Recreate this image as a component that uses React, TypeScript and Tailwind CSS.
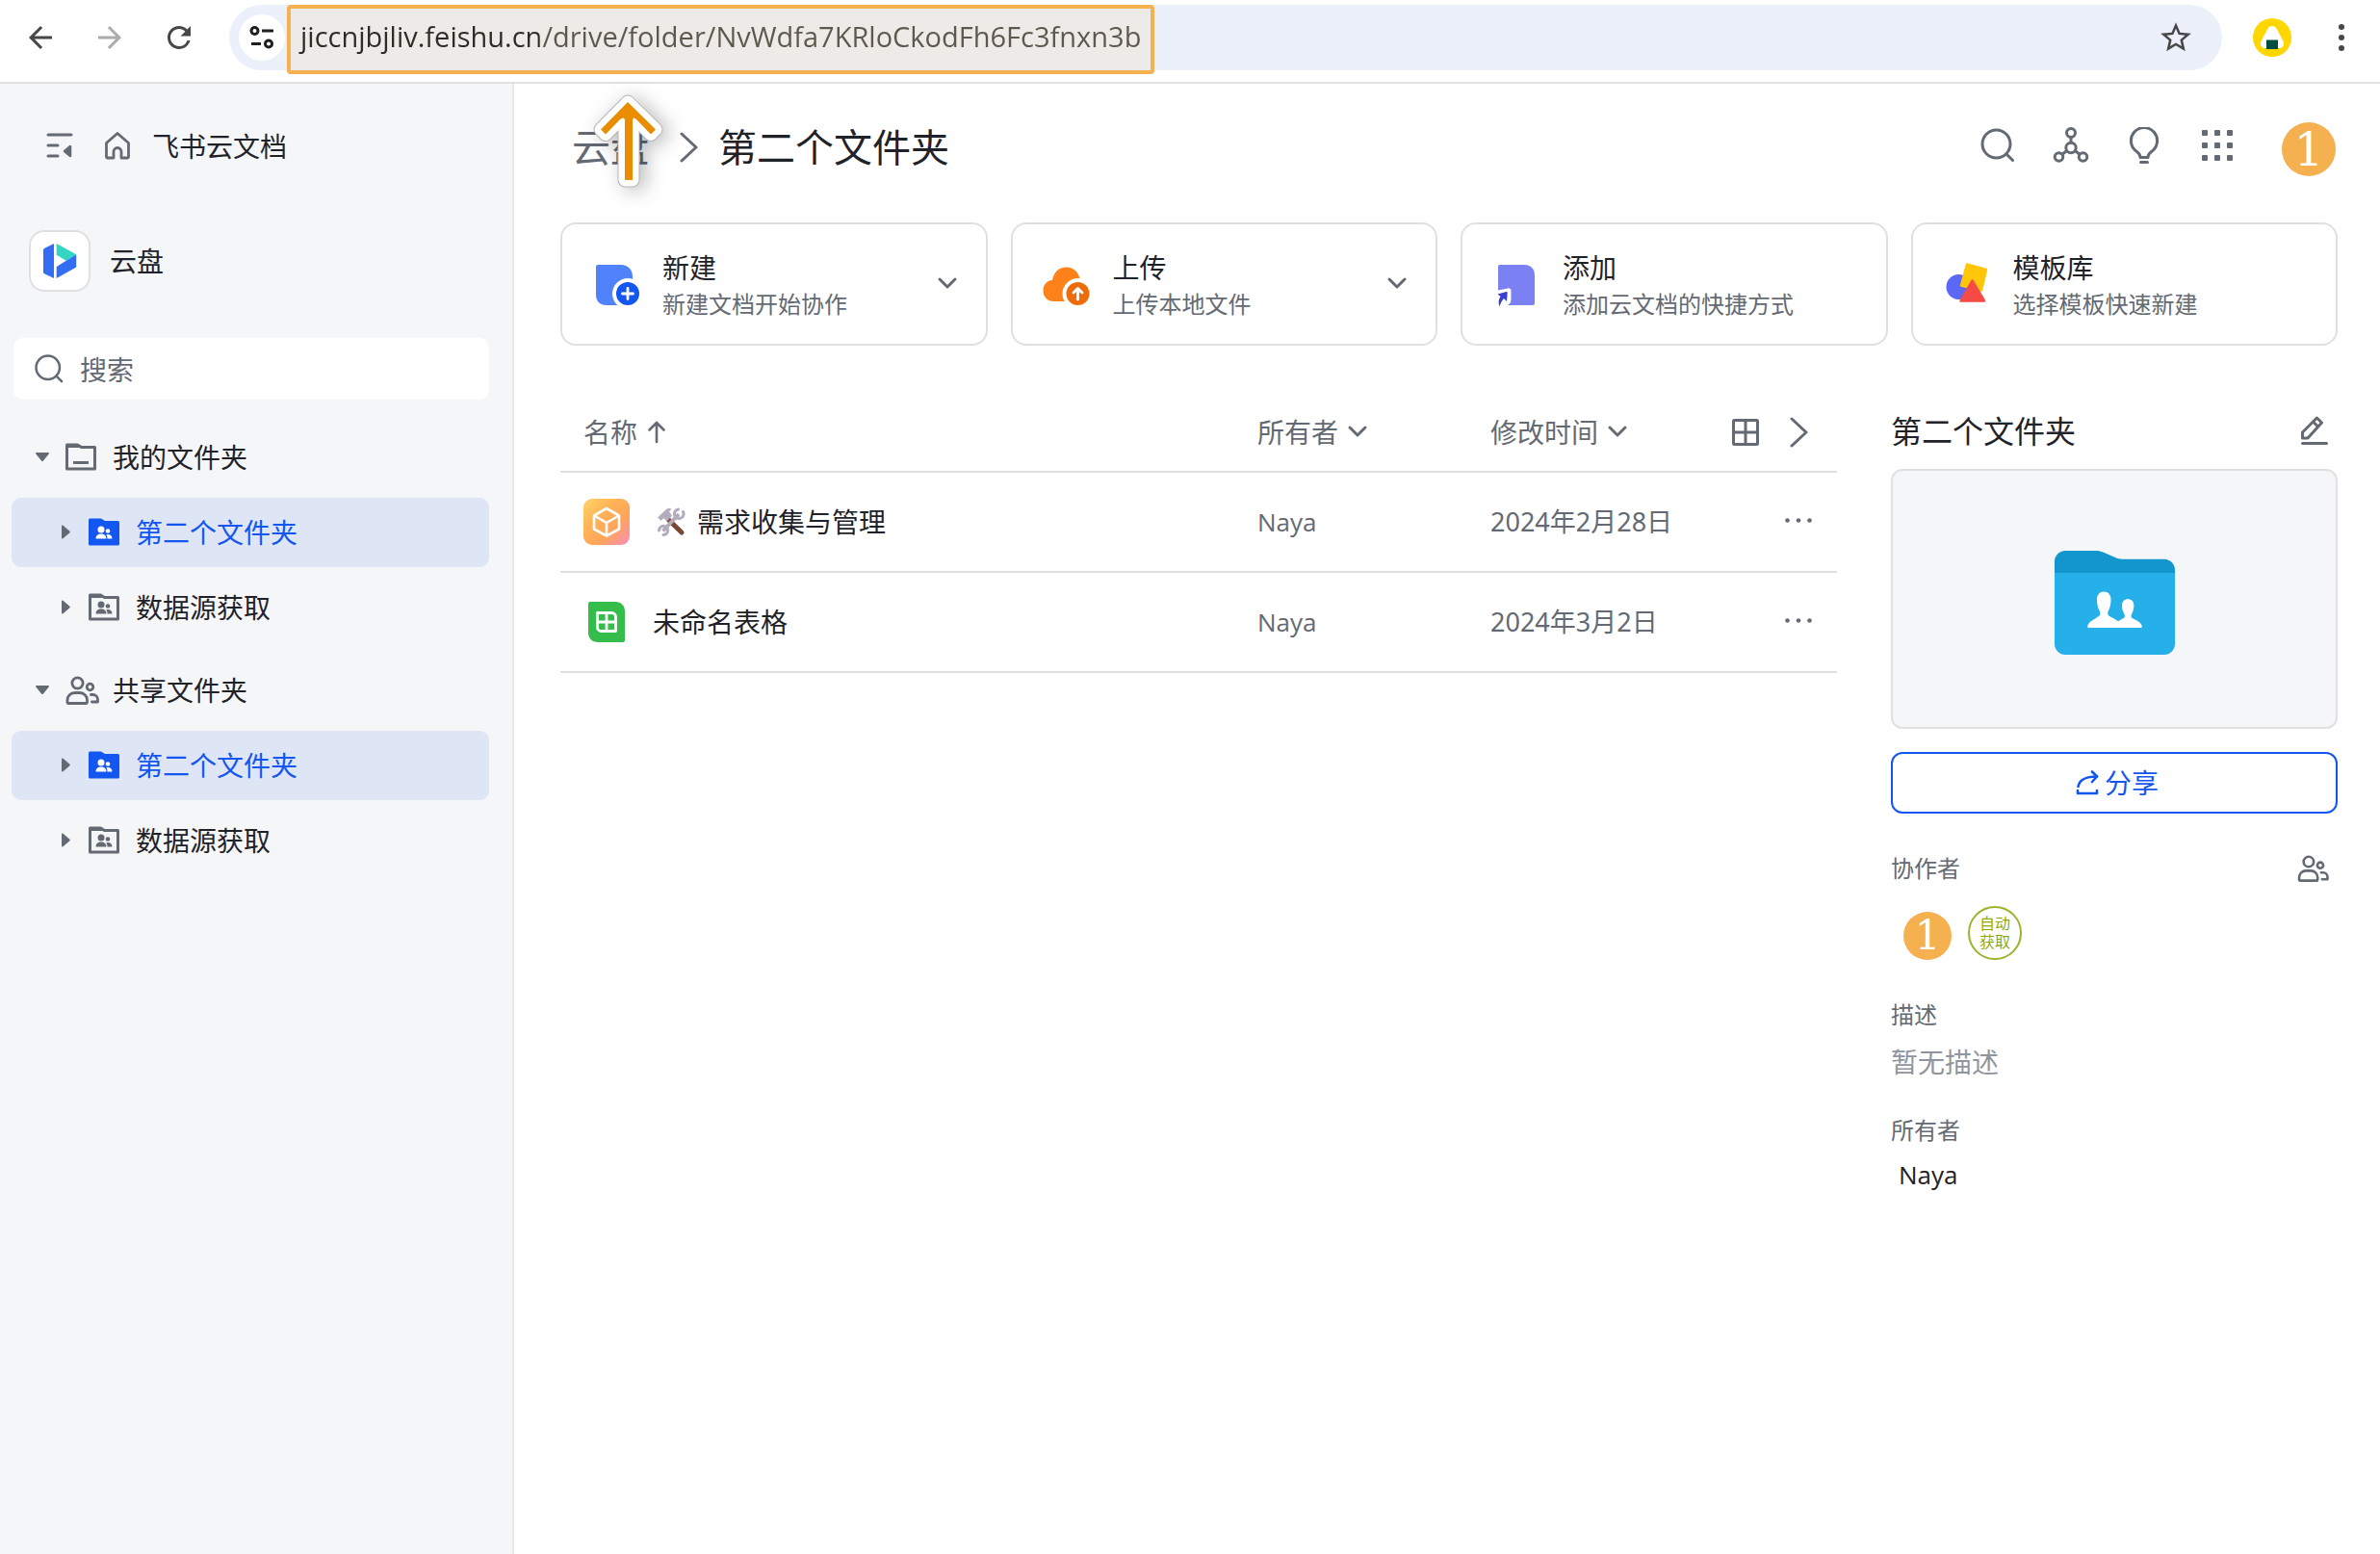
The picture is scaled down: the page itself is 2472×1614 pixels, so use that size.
import React from "react";
import { MdArrowBack, MdArrowForward, MdRefresh, MdStarBorder } from "react-icons/md";

type IconProps = { className?: string };

const stroke = {
  fill: "none",
  stroke: "currentColor",
  strokeWidth: 3,
  strokeLinecap: "round" as const,
  strokeLinejoin: "round" as const,
};

/* ---------- line icons ---------- */

function TuneIcon() {
  return (
    <svg viewBox="0 0 32 32" className="h-8 w-8" {...stroke} strokeLinecap="butt">
      <circle cx="8.500" cy="9" r="3.500" />
      <path d="M16 9h12M5 22.500h10" />
      <circle cx="23" cy="22.500" r="3.500" />
    </svg>
  );
}

function CollapseIcon() {
  return (
    <svg viewBox="0 0 32 32" className="h-8 w-8" {...stroke}>
      <path d="M4 4h24M4 15h10M4 26h10" />
      <path d="M27 16v10l-6-5z" fill="currentColor" strokeWidth="2.500" />
    </svg>
  );
}

function HomeIcon() {
  return (
    <svg viewBox="0 0 32 32" className="h-8 w-8" {...stroke} strokeWidth={2.8}>
      <path d="M4.500 12.500 16 2.500l11.500 10V27a1 1 0 0 1-1 1H20v-6.500a4 4 0 0 0-8 0V28H5.500a1 1 0 0 1-1-1z" />
    </svg>
  );
}

function SearchIcon({ className = "h-8 w-8" }: IconProps) {
  return (
    <svg viewBox="0 0 38 38" className={className} {...stroke}>
      <circle cx="17.500" cy="17.500" r="14.500" />
      <path d="m28 28 6.500 6.500" />
    </svg>
  );
}

function NetworkIcon() {
  return (
    <svg viewBox="0 0 38 38" className="h-[38px] w-[38px]" {...stroke}>
      <circle cx="19" cy="6" r="4.500" />
      <circle cx="19" cy="21.500" r="5.200" />
      <circle cx="6.500" cy="31" r="4.300" />
      <circle cx="31.500" cy="31" r="4.300" />
      <path d="M19 10.500v5.500M14.500 24.800l-4.500 3.500M23.500 24.800l4.500 3.500" />
    </svg>
  );
}

function BulbIcon() {
  return (
    <svg viewBox="0 0 38 38" className="h-[38px] w-[38px]" {...stroke}>
      <path d="M15 31.500c0-3.500-1.500-4.500-4-6.300a13.600 13.600 0 1 1 16 0c-2.500 1.800-4 2.800-4 6.300z" />
      <path d="M15.500 36.500h7" />
    </svg>
  );
}

function AppsIcon() {
  const at = [3, 16, 29];
  return (
    <svg viewBox="0 0 38 38" className="h-[38px] w-[38px]" fill="currentColor">
      {at.map((y) => at.map((x) => <rect key={`${x}-${y}`} x={x} y={y} width="6" height="6" rx="1" />))}
    </svg>
  );
}

function ChevronDown() {
  return (
    <svg viewBox="0 0 24 24" className="h-6 w-6 shrink-0" {...stroke}>
      <path d="m4 7 8 8 8-8" />
    </svg>
  );
}

function ChevronRight({ className = "h-8 w-5" }: IconProps) {
  return (
    <svg viewBox="0 0 20 32" className={className} {...stroke}>
      <path d="m2 2 15 14L2 30" />
    </svg>
  );
}

function SortUpIcon() {
  return (
    <svg viewBox="0 0 24 24" className="h-6 w-6" {...stroke} strokeWidth={2.6}>
      <path d="M12 22V2M4.500 9.500 12 2l7.500 7.500" />
    </svg>
  );
}

function GridIcon() {
  return (
    <svg viewBox="0 0 28 28" className="h-7 w-7" {...stroke}>
      <rect x="1.500" y="1.500" width="25" height="25" rx="1" />
      <path d="M14 2v24M2 14h24" />
    </svg>
  );
}

function PeopleIcon({ className = "h-[30px] w-9" }: IconProps) {
  return (
    <svg viewBox="0 0 36 30" className={className} {...stroke} strokeWidth={2.8}>
      <circle cx="12.500" cy="7.500" r="5.600" />
      <circle cx="25.500" cy="11.500" r="3.300" />
      <path d="M2 27.500V25a7.500 7.500 0 0 1 7.500-7.500h5.500a7.500 7.500 0 0 1 7.500 7.500v2.500a1 1 0 0 1-1 1H3a1 1 0 0 1-1-1z" />
      <path d="M26.500 19.500h2a5 5 0 0 1 5 5v2.500h-6" />
    </svg>
  );
}

function EditIcon() {
  return (
    <svg viewBox="0 0 32 32" className="h-8 w-8" {...stroke}>
      <path d="M3.500 23v-6L18.500 2l5 5L9 23z" />
      <path d="m14.500 6 5 5M3.500 28.500h25" />
    </svg>
  );
}

function ShareIcon() {
  return (
    <svg viewBox="0 0 24 26" className="h-[26px] w-6" {...stroke} strokeWidth={2.6}>
      <path d="M2.500 17C3.500 11 9 6.500 22 6.500" />
      <path d="m17 1.500 5 5-5 5.500M2 21v3h20v-3" />
    </svg>
  );
}

function MoreIcon() {
  return (
    <svg viewBox="0 0 28 28" className="h-7 w-7" fill="currentColor">
      <circle cx="2.500" cy="12.500" r="2.300" />
      <circle cx="14" cy="12.500" r="2.300" />
      <circle cx="25.500" cy="12.500" r="2.300" />
    </svg>
  );
}

/* ---------- tree icons ---------- */

function Caret({ open }: { open: boolean }) {
  return (
    <svg viewBox="0 0 16 16" className="h-4 w-4 text-[#646a73]" fill="currentColor">
      {open ? (
        <path d="M2 3h12c1 0 1.300.8.700 1.500L9 11.600c-.600.700-1.400.700-2 0L1.300 4.500C.7 3.800 1 3 2 3z" />
      ) : (
        <path d="M4 1.500v12c0 1 .8 1.300 1.500.7l6.700-5.700c.7-.6.7-1.400 0-2L5.500.8C4.800.2 4 .5 4 1.500z" />
      )}
    </svg>
  );
}

function FolderIcon() {
  return (
    <svg viewBox="0 0 32 32" className="h-8 w-8 text-[#646a73]" {...stroke}>
      <path d="M1.500 28V3h11l4 2.500h14V28z" />
      <path d="M3 3.500h9l3 2H3z" fill="currentColor" strokeWidth="1" />
      <path d="M8 21.500h16" strokeLinecap="butt" />
    </svg>
  );
}

function SharedFolderIcon({ active }: { active?: boolean }) {
  return (
    <svg viewBox="0 0 32 32" className={active ? "h-8 w-8 text-[#1456f0]" : "h-8 w-8 text-[#646a73]"} {...stroke}>
      <path d="M1.500 28V3h11l4 2.500h14V28z" fill={active ? "currentColor" : "none"} />
      <path d="M3 3.500h9l3 2H3z" fill="currentColor" strokeWidth="1" />
      <g fill={active ? "#fff" : "currentColor"} stroke="none">
        <circle cx="13" cy="13" r="3.500" />
        <circle cx="20" cy="14.500" r="2.300" />
        <path d="M7.500 22.500c0-3 2-5 5.500-5s5.500 2 5.500 5zM19.500 22.500c0-2-.5-3.400-1.200-4.300 3.600-.9 6.200.8 6.200 4.300z" />
      </g>
    </svg>
  );
}

/* ---------- coloured icons ---------- */

function DriveLogo() {
  return (
    <svg viewBox="0 0 36 36" className="h-9 w-9">
      <path d="M2 5 12 0v36L2 31.200C1.400 31 1 30.500 1 30V6.400C1 5.800 1.400 5.200 2 5z" fill="#336df4" />
      <path d="M14.700 0 35.200 11.300 24.700 17.800 14.700 11.800z" fill="#33d6c0" />
      <path d="M35.200 11.300v13.200L14.700 36V24z" fill="#336df4" />
    </svg>
  );
}

function NewDocIcon() {
  return (
    <svg viewBox="0 0 48 48" className="h-12 w-12 shrink-0">
      <path d="M5 4h24c7 0 12 5 12 12v30H14C7 46 3 42 3 35V6c0-1.200.8-2 2-2z" fill="#5083fb" />
      <circle cx="36" cy="34" r="16" fill="#fff" />
      <circle cx="36" cy="34" r="12" fill="#1456f0" />
      <path d="M36 28.500v11M30.500 34h11" stroke="#fff" strokeWidth="2.800" strokeLinecap="round" />
    </svg>
  );
}

function UploadIcon() {
  return (
    <svg viewBox="0 0 48 48" className="h-12 w-12 shrink-0 overflow-visible">
      <path d="M11 42C4 42-.5 37.500-.5 31c0-6 3.500-10.500 9.500-11C10.500 11.500 16 6.500 23.500 6.500S37 12 37.500 20C43 21.500 46 25.500 46 31c0 6-4 11-11 11z" fill="#ff811a" />
      <circle cx="35.500" cy="34" r="16" fill="#fff" />
      <circle cx="35.500" cy="34" r="12" fill="#ed6d0c" />
      <path d="M35.500 40V29M31 33l4.500-4.500L40 33" fill="none" stroke="#fff" strokeWidth="2.800" strokeLinecap="round" strokeLinejoin="round" />
    </svg>
  );
}

function ShortcutIcon() {
  return (
    <svg viewBox="0 0 48 48" className="h-12 w-12 shrink-0">
      <path d="M7 4h25c7 0 11 4 11 11v29c0 1.200-.8 2-2 2H15c2.500-1.500 3.500-3.500 3.500-6V31c0-2-1.500-3-3.500-2.500L5 30.500V6c0-1.200.8-2 2-2z" fill="#7b80f2" />
      <path d="M4.500 34.500 13.500 32c.8-.2 1.200.2 1.200 1l-.7 9-3-3c-2.500 2.500-3.500 5-4.500 8.500-1.500-4-1.200-7.500 1-10.500z" fill="#3b3fd0" />
    </svg>
  );
}

function TemplateIcon() {
  return (
    <svg viewBox="0 0 48 48" className="h-12 w-12 shrink-0">
      <circle cx="15.500" cy="27" r="13" fill="#5c67f6" />
      <path d="M24 3.500 44 9l-5 21.500L18 25.500z" fill="#ffc60a" stroke="#ffc60a" strokeWidth="2.500" strokeLinejoin="round" />
      <path d="M29.500 20.500 17.500 41.500h24.500z" fill="#f54a45" stroke="#f54a45" strokeWidth="2.500" strokeLinejoin="round" />
    </svg>
  );
}

function CubeFileIcon() {
  return (
    <svg viewBox="0 0 48 48" className="h-12 w-12">
      <defs>
        <linearGradient id="cube" x1="0" y1="0" x2="1" y2="1">
          <stop offset="0" stopColor="#ffd666" />
          <stop offset="0.350" stopColor="#ffb357" />
          <stop offset="0.650" stopColor="#ffa45a" />
          <stop offset="1" stopColor="#f88dc0" />
        </linearGradient>
      </defs>
      <rect width="48" height="48" rx="9" fill="url(#cube)" />
      <path d="M24 10 37 17.500v14L24 38.500l-13-7v-14zM12 18l12 7 12-7M24 25v13" fill="none" stroke="#fff" strokeWidth="2.600" strokeLinejoin="round" />
    </svg>
  );
}

function SheetFileIcon() {
  return (
    <svg viewBox="0 0 48 48" className="h-12 w-12">
      <path d="M7 3h26c6 0 10 4 10 10v30c0 1.200-.8 2-2 2H15C9 45 5 41 5 35V5c0-1.200.8-2 2-2z" fill="#35bd4b" />
      <path d="M14.500 14.500h15a4 4 0 0 1 4 4v15h-15a4 4 0 0 1-4-4zM24 14.500v19M14.500 24h19" fill="none" stroke="#fff" strokeWidth="2.800" strokeLinejoin="round" />
    </svg>
  );
}

function ToolsEmoji() {
  return (
    <svg viewBox="0 0 30 30" className="h-[30px] w-[30px]" role="img" aria-label="工具">
      <path d="M12 12.500 26 26" stroke="#7d4533" strokeWidth="5" strokeLinecap="round" />
      <path d="M1 10.500 9.500 2.500c2-1.700 4-1.700 6-.8l-2.500 2.500 3 4.500-5 5.500-3.500-3-3 2.500z" fill="#b4acbc" />
      <path d="M6.500 24.500 23 7" stroke="#b4acbc" strokeWidth="4" />
      <path d="M27.500 4.500A4.800 4.800 0 1 1 22.500 2M2.500 24A4.600 4.600 0 1 1 7 28.500" fill="none" stroke="#b4acbc" strokeWidth="3" strokeLinecap="round" />
    </svg>
  );
}

function BigSharedFolder() {
  return (
    <svg viewBox="0 0 125 108" className="h-[108px] w-[125px]">
      <path d="M0 11C0 5 5 0 11 0h32c3 0 5 .5 8 1.800l12 5.200c2.500 1.200 4.500 1.700 7.500 1.700H114c6 0 11 5 11 11V30H0z" fill="#1395cd" />
      <path d="M0 23h125v74c0 6-5 11-11 11H11c-6 0-11-5-11-11z" fill="#26b0e9" />
      <path d="M51.300 42.500c4.500 0 7.200 3.300 7.200 8 0 5-.9 9-2.700 12-.8 1.500-.6 4 .2 4.700 3 2 6.500 3.300 10 6.100 2-1.300 4-2.300 6-3.500 1.200-.8 1.200-2.500.4-4-1.700-2.900-2.400-5.600-2.400-9 0-4 2.300-6.500 6.200-6.500s6.200 2.500 6.200 6.500c0 3.400-.7 6.100-2.300 9-.8 1.500-.8 3.200.2 4 4 2.400 10 4.300 10.500 9 0 .8-.5 1.200-1.300 1.200H35.500c-.9 0-1.300-.4-1.300-1.200.5-5.200 8-7.600 12.300-11.200 1-.9 1-3.500.2-5-1.800-3-2.700-7.100-2.700-12.100 0-4.700 2.800-8 7.300-8z" fill="#fff" />
    </svg>
  );
}

function RiceBallAvatar() {
  return (
    <svg viewBox="0 0 40 40" className="h-10 w-10">
      <circle cx="20" cy="20" r="20" fill="#ffd600" />
      <path d="M20 8c2 0 3.600.9 4.600 2.700l6.500 12.200c2.400 4.400 0 8.100-4.100 8.100H13c-4.100 0-6.500-3.700-4.100-8.100l6.500-12.200C16.400 8.900 18 8 20 8z" fill="#fff" />
      <path d="M14 22.500h12V32H14z" fill="#004d40" />
    </svg>
  );
}

function PointerArrow() {
  const d = "M36 9 65 37.500 60 42.500 45 27Q41 23 41 29V90H33V29Q33 23 28 27L13 42.500 8 37.500Z";
  return (
    <svg viewBox="0 0 73 98" className="h-[98px] w-[73px] overflow-visible drop-shadow-[6px_3px_10px_rgba(0,0,0,0.28)]">
      <path d={d} fill="#fff" stroke="#b5b5b5" strokeWidth="15" strokeLinejoin="round" />
      <path d={d} fill="#fff" stroke="#fff" strokeWidth="13" strokeLinejoin="round" />
      <path d={d} fill="#ea8c00" />
    </svg>
  );
}

/* ---------- page parts ---------- */

function BrowserBar() {
  return (
    <header className="flex h-[87px] items-start border-b-2 border-[#e0e2e1] bg-white pt-[5px] pr-7 pl-[18px] text-[#474747]">
      <nav className="flex h-[68px] items-center gap-6">
        <button aria-label="后退" className="grid h-12 w-12 place-items-center"><MdArrowBack size={36} /></button>
        <button aria-label="前进" className="grid h-12 w-12 place-items-center text-[#acacac]"><MdArrowForward size={36} /></button>
        <button aria-label="刷新" className="grid h-12 w-12 place-items-center"><MdRefresh size={36} /></button>
      </nav>
      <div className="ml-7 flex h-[68px] flex-1 items-start rounded-full bg-[#ecf0fa] pr-[29px] pl-[10px]">
        <button aria-label="网站信息" className="mt-[10px] grid h-12 w-12 place-items-center rounded-full bg-white text-[#1f1f1f]">
          <TuneIcon />
        </button>
        <div className="ml-[2px] h-[72px] w-[901px] rounded-sm border-4 border-[#f5b04f] bg-[#edebe7] pb-2">
          <input
            aria-label="地址"
            readOnly
            value="jiccnjbjliv.feishu.cn/drive/folder/NvWdfa7KRloCkodFh6Fc3fnxn3b"
            className="h-full w-full bg-[linear-gradient(90deg,#2e2b26_258px,#5d574c_258px)] bg-clip-text pl-[10px] font-['Open_Sans'] text-[29px] text-transparent outline-none"
          />
        </div>
        <button aria-label="收藏" className="ml-auto grid h-[68px] w-[38px] place-items-center"><MdStarBorder size={38} /></button>
      </div>
      <div className="ml-8 flex h-[68px] items-center gap-10">
        <button aria-label="个人资料"><RiceBallAvatar /></button>
        <button aria-label="菜单">
          <svg viewBox="0 0 24 36" className="h-9 w-6" fill="currentColor">
            <circle cx="12" cy="7" r="3" />
            <circle cx="12" cy="18" r="3" />
            <circle cx="12" cy="29" r="3" />
          </svg>
        </button>
      </div>
    </header>
  );
}

function TreeGroup({ icon, title }: { icon: React.ReactNode; title: string }) {
  return (
    <ul className="flex flex-col gap-[6px]">
      <li>
        <button className="flex h-[72px] w-full items-center gap-4 pl-6">
          <Caret open />
          <span className="grid h-8 w-8 place-items-center">{icon}</span>
          <span className="pl-px">{title}</span>
        </button>
      </li>
      <li>
        <button className="flex h-[72px] w-full items-center gap-4 rounded-[10px] bg-[#dee5f5] pl-12 text-[#1456f0]">
          <Caret open={false} />
          <SharedFolderIcon active />
          <span className="pl-px">第二个文件夹</span>
        </button>
      </li>
      <li>
        <button className="flex h-[72px] w-full items-center gap-4 pl-12">
          <Caret open={false} />
          <SharedFolderIcon />
          <span className="pl-px">数据源获取</span>
        </button>
      </li>
    </ul>
  );
}

function Sidebar() {
  return (
    <aside className="w-[534px] shrink-0 border-r-2 border-[#e8e9eb] bg-[#f5f6f8] pt-[45px] text-[28px] leading-10">
      <div className="flex h-10 items-center pl-[46px]">
        <button aria-label="收起侧栏" className="text-[#646a73]"><CollapseIcon /></button>
        <a href="#home" className="ml-7 flex items-center gap-5">
          <span className="text-[#646a73]"><HomeIcon /></span>
          飞书云文档
        </a>
      </div>
      <a href="#drive" className="mt-[67px] flex h-16 items-center gap-5 pl-[30px]">
        <span className="grid h-16 w-16 place-items-center rounded-2xl border-2 border-[#dee0e3] bg-white"><DriveLogo /></span>
        云盘
      </a>
      <label className="mt-12 mr-6 ml-[14px] flex h-16 items-center gap-4 rounded-[10px] bg-white pl-[21px] text-[#646a73]">
        <SearchIcon className="h-8 w-8 shrink-0" />
        <input aria-label="搜索" placeholder="搜索" className="w-full pt-px outline-none placeholder:text-[#646a73]" />
      </label>
      <nav className="mt-6 mr-6 ml-3 flex flex-col gap-[14px]">
        <TreeGroup icon={<FolderIcon />} title="我的文件夹" />
        <TreeGroup icon={<PeopleIcon className="h-[30px] w-9 text-[#646a73]" />} title="共享文件夹" />
      </nav>
    </aside>
  );
}

function NumberAvatar({ large }: { large?: boolean }) {
  return (
    <span
      className={
        large
          ? "flex h-14 w-14 items-center justify-center rounded-full bg-[#f5b04f] font-['DejaVu_Serif'] text-[48px] leading-none text-white"
          : "flex h-[50px] w-[50px] items-center justify-center rounded-full bg-[#f5b04f] font-['DejaVu_Serif'] text-[42px] leading-none text-white"
      }
    >
      1
    </span>
  );
}

function PageHeader() {
  return (
    <div className="flex h-[132px] items-center">
      <nav aria-label="路径" className="flex items-center text-[40px] leading-[56px]">
        <a href="#drive" className="relative ml-3 text-[#646a73]">
          云盘
          <span className="absolute -top-7 left-[22px]"><PointerArrow /></span>
        </a>
        <ChevronRight className="mr-5 ml-8 h-8 w-5 text-[#646a73]" />
        <h1>第二个文件夹</h1>
      </nav>
      <div className="ml-auto flex items-center gap-[38px] pr-[2px] text-[#646a73]">
        <button aria-label="搜索" className="-mt-1"><SearchIcon className="h-[38px] w-[38px]" /></button>
        <button aria-label="关系" className="-mt-1"><NetworkIcon /></button>
        <button aria-label="帮助" className="-mt-1"><BulbIcon /></button>
        <button aria-label="应用" className="-mt-1"><AppsIcon /></button>
        <button aria-label="账号" className="ml-[10px] pt-1"><NumberAvatar large /></button>
      </div>
    </div>
  );
}

const actions = [
  { title: "新建", note: "新建文档开始协作", icon: <NewDocIcon />, menu: true },
  { title: "上传", note: "上传本地文件", icon: <UploadIcon />, menu: true },
  { title: "添加", note: "添加云文档的快捷方式", icon: <ShortcutIcon />, menu: false },
  { title: "模板库", note: "选择模板快速新建", icon: <TemplateIcon />, menu: false },
];

function ActionCards() {
  return (
    <div className="mt-3 grid grid-cols-4 gap-6">
      {actions.map((a) => (
        <button key={a.title} className="flex h-32 items-center rounded-2xl border-2 border-[#dee0e3] pr-7 pl-8 text-left">
          {a.icon}
          <span className="ml-6 flex flex-1 flex-col pt-[2px]">
            <span className="text-[28px] leading-10">{a.title}</span>
            <span className="text-2xl leading-9 text-[#646a73]">{a.note}</span>
          </span>
          {a.menu && <span className="text-[#646a73]"><ChevronDown /></span>}
        </button>
      ))}
    </div>
  );
}

const files = [
  {
    name: "需求收集与管理",
    icon: <CubeFileIcon />,
    emoji: true,
    owner: "Naya",
    date: "2024年2月28日",
  },
  { name: "未命名表格", icon: <SheetFileIcon />, emoji: false, owner: "Naya", date: "2024年3月2日" },
];

function FileTable() {
  return (
    <table className="w-full table-fixed text-left text-[28px] leading-10">
      <colgroup>
        <col />
        <col className="w-[242px]" />
        <col className="w-[206px]" />
        <col className="w-[154px]" />
      </colgroup>
      <thead>
        <tr className="h-[81px] border-b-2 border-[#dddfe1] text-[#646a73]">
          <th className="pl-6 font-normal">
            <button className="flex items-center gap-2">名称<SortUpIcon /></button>
          </th>
          <th className="font-normal">
            <button className="flex items-center gap-2">所有者<ChevronDown /></button>
          </th>
          <th className="font-normal">
            <button className="flex items-center gap-2">修改时间<ChevronDown /></button>
          </th>
          <th className="pr-[29px]">
            <span className="flex items-center justify-end gap-8">
              <button aria-label="网格视图"><GridIcon /></button>
              <button aria-label="收起详情"><ChevronRight className="h-8 w-5" /></button>
            </span>
          </th>
        </tr>
      </thead>
      <tbody>
        {files.map((f) => (
          <tr key={f.name} className="h-[104px] border-b-2 border-[#dddfe1] text-[#646a73]">
            <td className="pl-6">
              <a href="#file" className="flex items-center gap-6 text-[#1f2329]">
                {f.icon}
                <span className="flex items-center gap-3">
                  {f.emoji && <span className="pl-1"><ToolsEmoji /></span>}
                  {f.name}
                </span>
              </a>
            </td>
            <td className="font-['Open_Sans'] text-[26px]">{f.owner}</td>
            <td className="text-[27px]">{f.date}</td>
            <td className="pr-[26px]">
              <button aria-label="更多" className="ml-auto block"><MoreIcon /></button>
            </td>
          </tr>
        ))}
      </tbody>
    </table>
  );
}

function DetailPanel() {
  return (
    <aside className="w-[464px] shrink-0">
      <div className="flex h-[78px] items-center justify-between pr-2">
        <h2 className="text-[32px] leading-[48px]">第二个文件夹</h2>
        <button aria-label="重命名" className="text-[#646a73]"><EditIcon /></button>
      </div>
      <div className="grid h-[270px] place-items-center rounded-xl border-2 border-[#dee0e3] bg-[#f5f6f8] pt-2"><BigSharedFolder /></div>
      <button className="mt-6 flex h-16 w-full items-center justify-center gap-[6px] rounded-xl border-2 border-[#1456f0] pl-[6px] text-[28px] leading-10 text-[#1456f0]">
        <ShareIcon />
        分享
      </button>
      <div className="mt-[39px] flex h-9 items-center justify-between pr-2 text-2xl leading-9 text-[#646a73]">
        协作者
        <button aria-label="管理协作者"><PeopleIcon className="h-7 w-[34px]" /></button>
      </div>
      <div className="mt-[21px] flex items-end gap-[17px] pl-[13px]">
        <NumberAvatar />
        <span className="flex h-14 w-14 items-center justify-center rounded-full border-2 border-[#9ab52a] bg-white text-center text-base leading-[19px] text-[#8dab10]">
          自动
          <br />
          获取
        </span>
      </div>
      <h3 className="mt-[39px] text-2xl leading-9 text-[#646a73]">描述</h3>
      <p className="mt-[11px] text-[28px] leading-10 text-[#8f959e]">暂无描述</p>
      <h3 className="mt-[33px] text-2xl leading-9 text-[#646a73]">所有者</h3>
      <p className="mt-2 pl-2 font-['Open_Sans'] text-[26px] leading-10">Naya</p>
    </aside>
  );
}

export default function App() {
  return (
    <div className="flex min-h-screen flex-col bg-white font-['Noto_Sans','Noto_Sans_CJK_SC',sans-serif] text-[#1f2329]">
      <BrowserBar />
      <div className="flex flex-1">
        <Sidebar />
        <main className="min-w-0 flex-1 pr-11 pl-12">
          <PageHeader />
          <ActionCards />
          <div className="mt-[50px] flex items-start gap-14">
            <div className="min-w-0 flex-1"><FileTable /></div>
            <DetailPanel />
          </div>
        </main>
      </div>
    </div>
  );
}
